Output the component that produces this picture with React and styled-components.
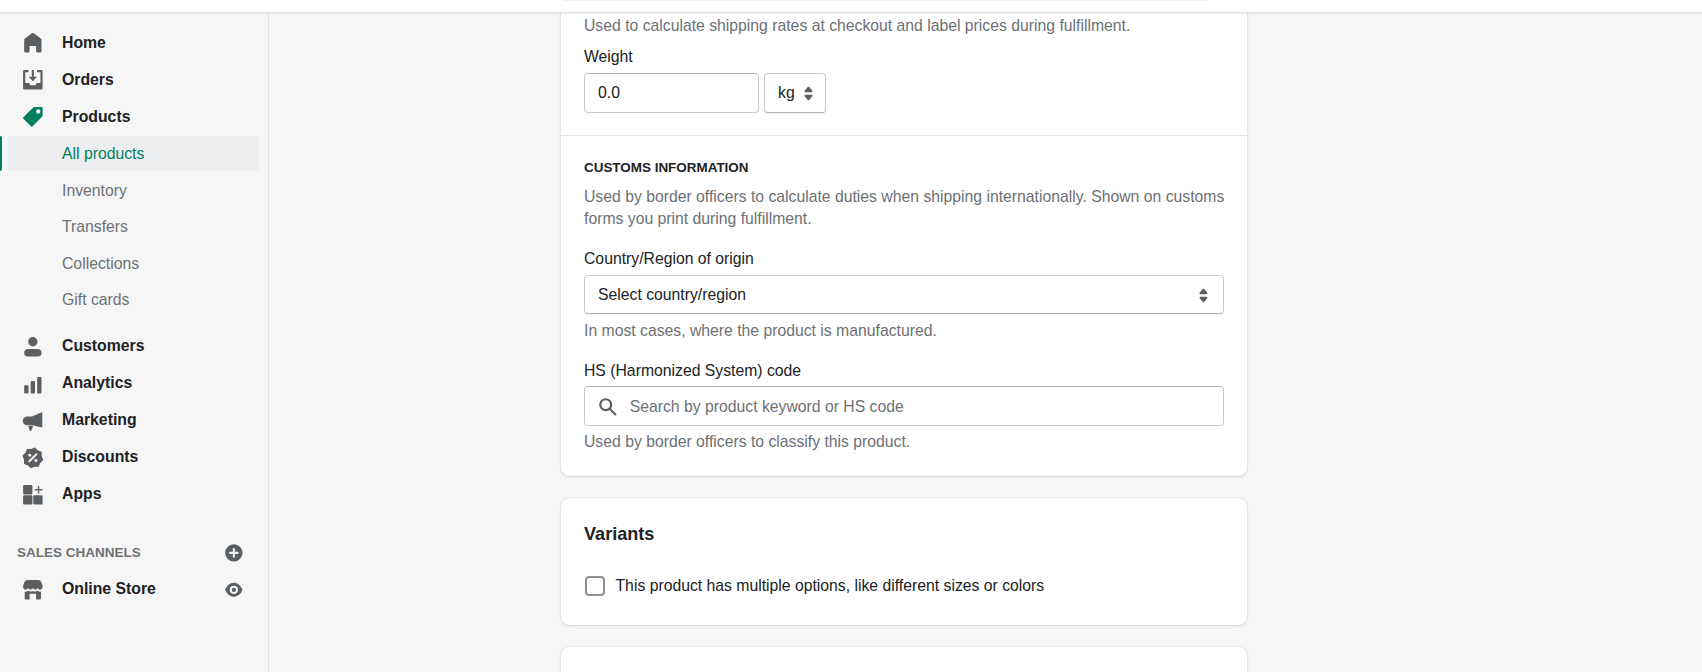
import React from "react"
import styled, { createGlobalStyle } from "styled-components"

const GlobalStyle = createGlobalStyle`
  html, body {
    margin: 0;
    padding: 0;
    background: #f6f6f7;
    font-family: "Liberation Sans", Arial, sans-serif;
    color: #202223;
  }
`

const Page = styled.div`
  height: 672px;
  display: flex;
  flex-direction: column;
  overflow: hidden;
`

const TopBar = styled.header`
  height: 12px;
  flex-shrink: 0;
  background: #fff;
  border-bottom: 1px solid #dfe1e3;
  box-shadow: 0 1px 2px rgba(63, 63, 68, 0.1);
  padding-left: 563px;
  position: relative;
  z-index: 2;
`

const TopStrip = styled.div`
  width: 647px;
  height: 1px;
  background: #f1f1f2;
`

const Body = styled.div`
  flex: 1;
  display: flex;
  min-height: 0;
`

const Sidebar = styled.nav`
  width: 269px;
  flex-shrink: 0;
  box-sizing: border-box;
  border-right: 1px solid #dfe3e8;
  padding-top: 11px;
`

const NavRow = styled.div`
  height: 37px;
  display: flex;
  align-items: center;
  padding-left: 22px;
  font-size: 15.8px;
  font-weight: 700;
  color: #202223;
`

const IconSlot = styled.svg`
  width: 21.7px;
  height: 21.7px;
  flex-shrink: 0;
  margin: 1px 18.3px 0 0;
  fill: ${p => p.$color || "#5c5f62"};
`

const SubRow = styled.div`
  height: 36.5px;
  display: flex;
  align-items: center;
  padding-left: 62px;
  font-size: 15.76px;
  color: #6d7175;
  position: relative;
`

const SelectedRow = styled(SubRow)`
  color: #008060;
  &::before {
    content: "";
    position: absolute;
    left: 8px;
    right: 9px;
    top: 0;
    height: 35px;
    border-radius: 4px;
    background: #edeeef;
  }
  &::after {
    content: "";
    position: absolute;
    left: 0;
    top: 0;
    width: 2px;
    height: 35px;
    background: #008060;
    border-radius: 0 2px 2px 0;
  }
`

const SubLabel = styled.span`
  position: relative;
  z-index: 1;
`

const SubList = styled.div`
  margin-top: 1.2px;
  margin-bottom: 9.3px;
`

const ChannelHeading = styled.div`
  height: 37px;
  margin-top: 21px;
  display: flex;
  align-items: center;
  justify-content: space-between;
  padding: 0 23px 0 17px;
  font-size: 13.5px;
  font-weight: 700;
  color: #6d7175;
  text-transform: uppercase;
`

const RowEnd = styled.span`
  margin-left: auto;
  margin-right: 23px;
  display: flex;
`

const SmallIcon = styled.svg`
  width: 21.7px;
  height: 21.7px;
  fill: #5c5f62;
  display: block;
`

const Main = styled.main`
  flex: 1;
  min-width: 0;
  padding-left: 292px;
  overflow: hidden;
`

const Column = styled.div`
  width: 686px;
  display: flex;
  flex-direction: column;
  gap: 22px;
`

const Card = styled.section`
  background: #fff;
  border-radius: ${p => (p.$clipped ? "0 0 8.7px 8.7px" : "8.7px")};
  box-shadow: 0 0 0 1px rgba(63, 63, 68, 0.05), 0 1px 3px 0 rgba(63, 63, 68, 0.15);
`

const ShippingSection = styled.div`
  padding: 2px 23px 22px;
  border-bottom: 1px solid #e1e3e5;
`

const CustomsSection = styled.div`
  padding: 22px 21px 23px 23px;
`

const Help = styled.div`
  font-size: 15.76px;
  line-height: 21.7px;
  color: #6d7175;
  margin-top: ${p => p.$top || 0}px;
`

const Label = styled.label`
  display: block;
  font-size: 15.76px;
  line-height: 21.7px;
  color: #202223;
  margin-top: ${p => p.$top || 0}px;
  margin-bottom: ${p => p.$bottom || 6}px;
`

const Eyebrow = styled.h3`
  margin: 0 0 8px;
  font-size: 13.45px;
  line-height: 20px;
  font-weight: 700;
  text-transform: uppercase;
  color: #202223;
`

const InlineFields = styled.div`
  display: flex;
  gap: 5px;
`

const FieldBox = styled.div`
  box-sizing: border-box;
  height: ${p => p.$height || 39}px;
  width: ${p => p.$width || "640px"};
  display: flex;
  align-items: center;
  background: #fff;
  border: 1px solid #c9cccf;
  border-top-color: #aeb4b9;
  border-radius: 4px;
  padding: ${p => (p.$width ? "0 13px" : "2px 13px 0")};
  font-size: 15.76px;
  color: #202223;
`

const SelectBox = styled(FieldBox)`
  justify-content: space-between;
  padding-right: 6px;
  border-top-color: #c9cccf;
  border-bottom-color: #aeb4b9;
  box-shadow: 0 1px 0 rgba(22, 29, 37, 0.05);
`

const Placeholder = styled.span`
  color: #6d7175;
  margin-left: 11px;
`

const SearchIcon = styled.svg`
  width: 21.7px;
  height: 21.7px;
  fill: #5c5f62;
  margin-left: -1px;
  flex-shrink: 0;
`

const ChevronIcon = styled.svg`
  width: 27px;
  height: 27px;
  fill: #5c5f62;
  flex-shrink: 0;
`

const VariantsCard = styled(Card)`
  padding: 23px 22px 28px 23px;
`

const CardTitle = styled.h2`
  margin: 0 0 28px;
  font-size: 18.1px;
  line-height: 26px;
  font-weight: 700;
  color: #202223;
`

const CheckRow = styled.div`
  display: flex;
  align-items: center;
  font-size: 15.76px;
  line-height: 22px;
  color: #202223;
`

const CheckBox = styled.span`
  box-sizing: border-box;
  width: 20px;
  height: 20px;
  margin: 0 10.5px 0 1px;
  border: 2px solid #8c9196;
  border-radius: 4px;
  background: #fff;
`

const EmptyCard = styled(Card)`
  height: 120px;
  flex-shrink: 0;
`

const Chevrons = () => (
  <ChevronIcon viewBox="0 0 20 20">
    <path d="M7.676 9h4.648c.563 0 .879-.603.53-1.014L10.531 5.24a.708.708 0 0 0-1.062 0L7.145 7.986C6.798 8.397 7.113 9 7.676 9zm4.648 2H7.676c-.563 0-.878.603-.53 1.014l2.323 2.746c.27.32.792.32 1.062 0l2.323-2.746c.349-.411.033-1.014-.53-1.014z" />
  </ChevronIcon>
)

const Icon = ({ color, children }) => (
  <IconSlot viewBox="0 0 20 20" $color={color}>
    {children}
  </IconSlot>
)

const badgePoints = Array.from({ length: 16 }, (_, i) => {
  const r = i % 2 === 0 ? 9.2 : 7.8
  const a = ((i + 0.5) * Math.PI) / 8
  return `${(10 + r * Math.sin(a)).toFixed(2)},${(10 - r * Math.cos(a)).toFixed(2)}`
}).join(" ")

const primaryItems = [
  {
    label: "Customers",
    icon: (
      <>
        <circle cx="10" cy="5.3" r="4.3" />
        <rect x="2" y="12" width="16" height="7" rx="3.5" />
      </>
    ),
  },
  {
    label: "Analytics",
    icon: (
      <>
        <rect x="2" y="11.3" width="4" height="7.7" rx="1" />
        <rect x="8" y="7.4" width="4" height="11.6" rx="1" />
        <rect x="14" y="3.6" width="4" height="15.4" rx="1" />
      </>
    ),
  },
  {
    label: "Marketing",
    icon: (
      <>
        <path d="M18.7 1.800v14.400L9.200 14H4.700a4 4 0 0 1 0-8h4.500z" />
        <path d="M5.800 14.500h4.400l-1.400 4.200a1 1 0 0 1-1.800 0z" />
      </>
    ),
  },
  {
    label: "Discounts",
    icon: (
      <>
        <polygon points={badgePoints} stroke="#5c5f62" strokeWidth="1" strokeLinejoin="round" />
        <path d="M6.800 13.200l6.400-6.400" stroke="#f6f6f7" strokeWidth="1.800" strokeLinecap="round" />
        <circle cx="7.200" cy="7.600" r="1.350" fill="#f6f6f7" />
        <circle cx="12.800" cy="12.400" r="1.350" fill="#f6f6f7" />
      </>
    ),
  },
  {
    label: "Apps",
    icon: (
      <>
        <rect x="1" y="1" width="8.600" height="8.600" rx="1" />
        <rect x="1" y="10.400" width="8.600" height="8.600" rx="1" />
        <rect x="10.400" y="10.400" width="8.600" height="8.600" rx="1" />
        <path d="M14.700 1.800h1.200v2.900h2.900v1.200h-2.900v2.900h-1.200V5.900h-2.900V4.700h2.900z" />
      </>
    ),
  },
]

const subItems = ["Inventory", "Transfers", "Collections", "Gift cards"]

export default function App() {
  return (
    <Page>
      <GlobalStyle />
      <TopBar>
        <TopStrip />
      </TopBar>
      <Body>
        <Sidebar>
          <NavRow>
            <Icon>
              <path d="M18 7.261V17.5c0 .841-.672 1.5-1.5 1.5h-2c-.828 0-1.500-.659-1.500-1.500V13H7v4.477C7 18.318 6.328 19 5.500 19h-2c-.828 0-1.500-.682-1.500-1.523V7.261a1.500 1.500 0 0 1 .615-1.210l6.590-4.820a1.481 1.481 0 0 1 1.590 0l6.590 4.820A1.500 1.500 0 0 1 18 7.260z" />
            </Icon>
            Home
          </NavRow>
          <NavRow>
            <Icon>
              <path d="M2 1h4v2H3v10h3.600l1 2h4.800l1-2H17V3h-3V1h4a1 1 0 0 1 1 1v16a1 1 0 0 1-1 1H2a1 1 0 0 1-1-1V2a1 1 0 0 1 1-1z" />
              <path d="M9 1h2v6.200h2.900L10 11.400 6.100 7.200H9z" />
            </Icon>
            Orders
          </NavRow>
          <NavRow>
            <Icon color="#008060">
              <path d="M11 1a1 1 0 0 0-.707.293l-9 9a1 1 0 0 0 0 1.414l7 7a1 1 0 0 0 1.414 0l9-9A1 1 0 0 0 19 9V2a1 1 0 0 0-1-1h-7zm4 6a2 2 0 1 1 0-4 2 2 0 0 1 0 4z" />
            </Icon>
            Products
          </NavRow>
          <SubList>
            <SelectedRow>
              <SubLabel>All products</SubLabel>
            </SelectedRow>
            {subItems.map(item => (
              <SubRow key={item}>{item}</SubRow>
            ))}
          </SubList>
          {primaryItems.map(item => (
            <NavRow key={item.label}>
              <Icon>{item.icon}</Icon>
              {item.label}
            </NavRow>
          ))}
          <ChannelHeading>
            Sales channels
            <SmallIcon viewBox="0 0 20 20">
              <path d="M10 2a8 8 0 1 0 0 16 8 8 0 0 0 0-16zm1 4.500v2.500h2.500a1 1 0 1 1 0 2H11v2.500a1 1 0 1 1-2 0V11H6.500a1 1 0 1 1 0-2H9V6.500a1 1 0 1 1 2 0z" />
            </SmallIcon>
          </ChannelHeading>
          <NavRow>
            <Icon>
              <path d="M5 1h10a3 3 0 0 1 2.800 1.900L19 6.500v1.200a2.300 2.300 0 0 1-4.500.500 2.400 2.400 0 0 1-4.500 0 2.400 2.400 0 0 1-4.500 0A2.300 2.300 0 0 1 1 7.700V6.500l1.200-3.600A3 3 0 0 1 5 1z" />
              <path d="M2.500 11.500c1.300.4 2.500.1 3.500-.6 1.200.9 2.800.9 4 .1 1.200.8 2.800.8 4-.1 1 .7 2.200 1 3.500.6V18a1 1 0 0 1-1 1H13v-5.500H7V19H3.500a1 1 0 0 1-1-1z" />
            </Icon>
            Online Store
            <RowEnd>
              <SmallIcon viewBox="0 0 20 20">
                <path d="M10 3.500C5.700 3.500 2.800 7.500 2 10c.8 2.500 3.700 6.500 8 6.500s7.200-4 8-6.500c-.8-2.500-3.700-6.500-8-6.500zm0 10.300a3.800 3.800 0 1 1 0-7.600 3.800 3.800 0 0 1 0 7.600zM10 8a2 2 0 1 0 0 4 2 2 0 0 0 0-4z" />
              </SmallIcon>
            </RowEnd>
          </NavRow>
        </Sidebar>
        <Main>
          <Column>
            <Card $clipped>
              <ShippingSection>
                <Help>Used to calculate shipping rates at checkout and label prices during fulfillment.</Help>
                <Label $top={9}>Weight</Label>
                <InlineFields>
                  <FieldBox $width="175px" $height={40}>0.0</FieldBox>
                  <SelectBox $width="62px" $height={40}>
                    kg
                    <Chevrons />
                  </SelectBox>
                </InlineFields>
              </ShippingSection>
              <CustomsSection>
                <Eyebrow>Customs information</Eyebrow>
                <Help>
                  Used by border officers to calculate duties when shipping internationally. Shown on customs forms you
                  print during fulfillment.
                </Help>
                <Label $top={18} $bottom={5}>Country/Region of origin</Label>
                <SelectBox>
                  Select country/region
                  <Chevrons />
                </SelectBox>
                <Help $top={6}>In most cases, where the product is manufactured.</Help>
                <Label $top={18.5} $bottom={4.5}>HS (Harmonized System) code</Label>
                <FieldBox $height={40}>
                  <SearchIcon viewBox="0 0 20 20">
                    <path d="M8 12a4 4 0 1 1 0-8 4 4 0 0 1 0 8zm9.707 4.293l-4.820-4.820A5.968 5.968 0 0 0 14 8 6 6 0 0 0 2 8a6 6 0 0 0 6 6 5.968 5.968 0 0 0 3.473-1.113l4.820 4.820a.997.997 0 0 0 1.414 0 .999.999 0 0 0 0-1.414z" />
                  </SearchIcon>
                  <Placeholder>Search by product keyword or HS code</Placeholder>
                </FieldBox>
                <Help $top={5}>Used by border officers to classify this product.</Help>
              </CustomsSection>
            </Card>
            <VariantsCard>
              <CardTitle>Variants</CardTitle>
              <CheckRow>
                <CheckBox />
                This product has multiple options, like different sizes or colors
              </CheckRow>
            </VariantsCard>
            <EmptyCard />
          </Column>
        </Main>
      </Body>
    </Page>
  )
}
